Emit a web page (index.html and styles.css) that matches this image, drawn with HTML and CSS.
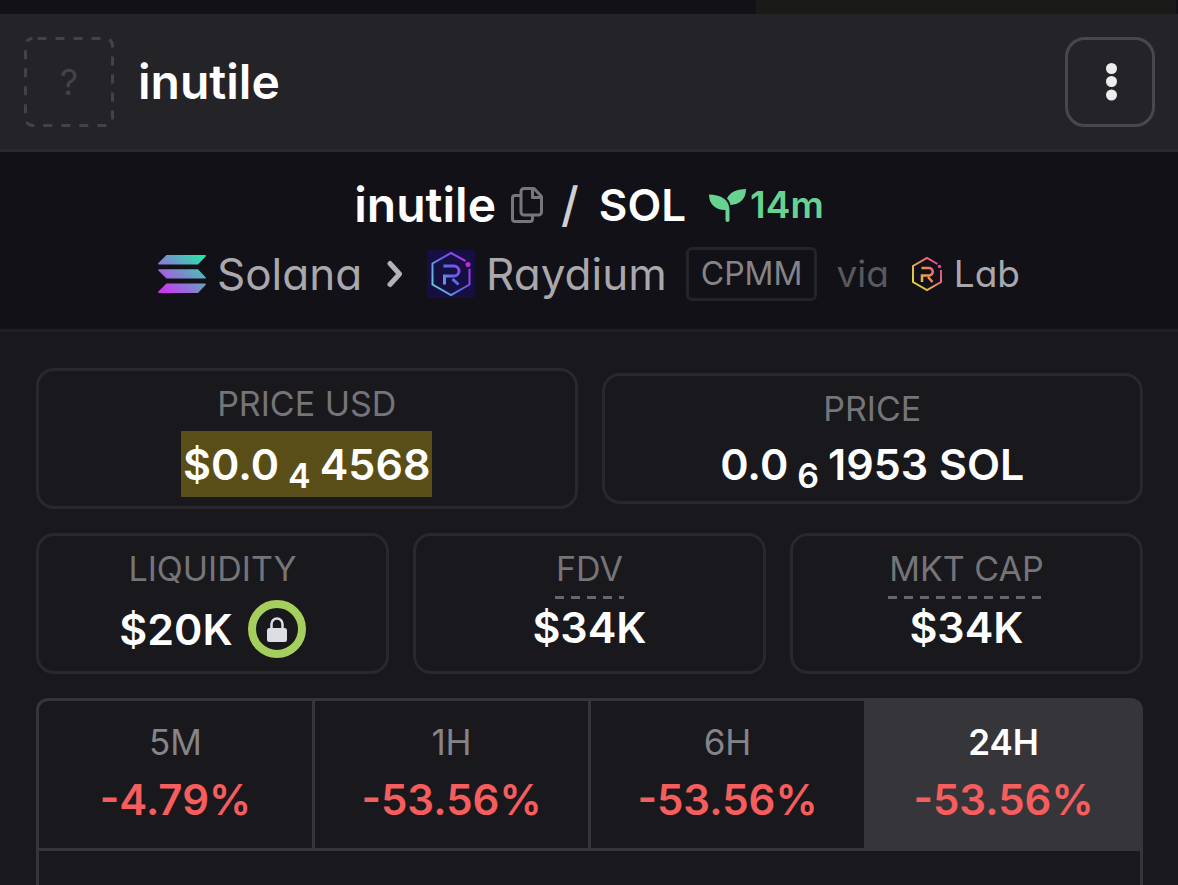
FILE: index.html
```html
<!DOCTYPE html>
<html lang="en">
<head>
  <meta charset="UTF-8">
  <meta name="viewport" content="width=device-width, initial-scale=1.0">
  <title>inutile / SOL</title>
  <link rel="stylesheet" href="styles.css">
</head>
<body>
  <div class="top-strip"><div class="top-strip-block"></div></div>

  <header class="header">
    <div class="token-image">
      <svg class="token-frame" viewBox="0 0 90 90" aria-hidden="true">
        <rect x="1.5" y="1.5" width="87" height="87" rx="7" fill="none" stroke="#434347" stroke-width="3" stroke-dasharray="9 9" stroke-dashoffset="-5"/>
      </svg>
      <span>?</span>
    </div>
    <h1 class="token-name">inutile</h1>
    <button class="menu-button" type="button" aria-label="More options">
      <svg width="14" height="38" viewBox="0 0 14 38" fill="#ededf0" aria-hidden="true">
        <circle cx="8.500" cy="5.500" r="5.500"/>
        <circle cx="8.500" cy="18.500" r="5.500"/>
        <circle cx="8.500" cy="32" r="5.500"/>
      </svg>
    </button>
  </header>

  <section class="pair">
    <h2 class="pair-title">
      <span class="base">inutile</span>
      <button class="copy-button" type="button" aria-label="Copy token address">
        <svg width="32" height="36" viewBox="0 0 32 36" fill="none" stroke="#77777b" stroke-width="3" stroke-linejoin="round" aria-hidden="true">
          <path d="M13 1.500h10l7.500 8V25a3 3 0 0 1-3 3H13a3 3 0 0 1-3-3V4.500a3 3 0 0 1 3-3z"/>
          <path d="M21.500 2v8.500H30"/>
          <path d="M10 8.500H4A2.500 2.500 0 0 0 1.500 11v21A2.500 2.500 0 0 0 4 34.500h15a2.500 2.500 0 0 0 2.500-2.500v-4"/>
        </svg>
      </button>
      <span class="slash">/</span>
      <span class="quote">SOL</span>
      <span class="age">
        <svg width="37" height="33" viewBox="0 0 37 33" fill="#68d391" aria-hidden="true">
          <path d="M0 5.500c11 0 20.500 4.500 20.500 15.500v10a2 2 0 0 1-4 0V21C6 21 0 15 0 5.500z"/>
          <path d="M37 0c0 10-6 15.500-15.500 16-.5-2.500-1.500-4.500-3.500-6.500C21 3.500 27 0 37 0z"/>
        </svg>
        <span>14m</span>
      </span>
    </h2>

    <nav class="route">
      <a class="route-link" href="#">
        <svg width="48" height="38" viewBox="0 0 48 38" aria-hidden="true">
          <defs>
            <linearGradient id="sol" gradientUnits="userSpaceOnUse" x1="44" y1="-4" x2="8" y2="40">
              <stop offset="0" stop-color="#19f2a5"/>
              <stop offset="1" stop-color="#cf33f0"/>
            </linearGradient>
          </defs>
          <path fill="url(#sol)" d="M8.500 0H47a.8.8 0 0 1 .6 1.400L40 9.500H1a.8.8 0 0 1-.6-1.400zM1 14.200h39l7.600 8a.8.8 0 0 1-.6 1.400H8.500L.4 15.600a.8.8 0 0 1 .6-1.400zM8.500 28.500H47a.8.8 0 0 1 .6 1.400L40 38H1a.8.8 0 0 1-.6-1.400z"/>
        </svg>
        <span>Solana</span>
      </a>
      <svg class="chevron" width="17" height="28" viewBox="0 0 17 28" fill="none" stroke="#b3b3b5" stroke-width="5" stroke-linecap="round" stroke-linejoin="round" aria-hidden="true">
        <path d="M4 3.500L13.500 14 4 24.500"/>
      </svg>
      <a class="route-link" href="#">
        <svg width="48" height="48" viewBox="0 0 48 48" fill="none" aria-hidden="true">
          <defs>
            <linearGradient id="ray" gradientUnits="userSpaceOnUse" x1="43" y1="12" x2="5" y2="34">
              <stop offset="0" stop-color="#b92be6"/>
              <stop offset=".5" stop-color="#5a68ea"/>
              <stop offset="1" stop-color="#67c9dc"/>
            </linearGradient>
          </defs>
          <rect width="48" height="48" rx="3" fill="#160f42"/>
          <g stroke="url(#ray)">
            <path stroke-width="2" d="M38.500 11L24 3 5.500 13.500v21L24 45l18.500-10.500V19"/>
            <path stroke-width="3" d="M16.500 16H27a5 5 0 0 1 0 10h-9.500v8.500M25.500 29l6 5.500"/>
          </g>
          <circle cx="41" cy="14.500" r="2.500" fill="#c22be0"/>
        </svg>
        <span>Raydium</span>
      </a>
      <span class="pool-type">CPMM</span>
      <span class="via">via</span>
      <a class="route-link lab" href="#">
        <svg width="32" height="36" viewBox="0 0 32 36" fill="none" aria-hidden="true">
          <defs>
            <linearGradient id="lab" gradientUnits="userSpaceOnUse" x1="30" y1="8" x2="3" y2="26">
              <stop offset="0" stop-color="#e0409c"/>
              <stop offset=".5" stop-color="#f08a58"/>
              <stop offset="1" stop-color="#e3d23c"/>
            </linearGradient>
          </defs>
          <g stroke="url(#lab)">
            <path stroke-width="2" d="M26.500 8L16 2 2 10v16l14 8 14-8V14"/>
            <path stroke-width="2.500" d="M10.500 12H18a3.500 3.500 0 0 1 0 7.500h-7V26M17 21l4.500 5"/>
          </g>
          <circle cx="28.500" cy="10.500" r="1.800" fill="#e83ca8"/>
        </svg>
        <span>Lab</span>
      </a>
    </nav>
  </section>

  <main class="stats">
    <div class="row row-prices">
      <div class="card">
        <div class="label">PRICE USD</div>
        <div class="value highlight">$0.0<sub>4</sub>4568</div>
      </div>
      <div class="card">
        <div class="label">PRICE</div>
        <div class="value">0.0<sub>6</sub>1953 SOL</div>
      </div>
    </div>

    <div class="row">
      <div class="card">
        <div class="label">LIQUIDITY</div>
        <div class="value liquidity">
          <span>$20K</span>
          <span class="lock">
            <svg width="20" height="26" viewBox="0 0 20 26" aria-hidden="true">
              <path d="M4.500 13V8a5.500 5.500 0 0 1 11 0v5" fill="none" stroke="#dddde4" stroke-width="2.500"/>
              <rect y="12" width="20" height="14" rx="2.500" fill="#dddde4"/>
            </svg>
          </span>
        </div>
      </div>
      <div class="card">
        <div class="label hint">FDV</div>
        <div class="value">$34K</div>
      </div>
      <div class="card">
        <div class="label hint">MKT CAP</div>
        <div class="value">$34K</div>
      </div>
    </div>

    <div class="panel">
      <div class="tabs">
        <button class="tab" type="button"><span class="period">5M</span><span class="change">-4.79%</span></button>
        <button class="tab" type="button"><span class="period">1H</span><span class="change">-53.56%</span></button>
        <button class="tab" type="button"><span class="period">6H</span><span class="change">-53.56%</span></button>
        <button class="tab active" type="button"><span class="period">24H</span><span class="change">-53.56%</span></button>
      </div>
    </div>
  </main>
</body>
</html>
```
FILE: styles.css
```css
* {
  box-sizing: border-box;
}

body {
  margin: 0;
  min-height: 100vh;
  display: flex;
  flex-direction: column;
  background: #19181d;
  color: #fff;
  font-family: Inter, "Liberation Sans", sans-serif;
  font-feature-settings: "cv11";
}

button {
  font: inherit;
  font-feature-settings: inherit;
  color: inherit;
  background: none;
  border: none;
  padding: 0;
  cursor: pointer;
}

a {
  color: inherit;
  text-decoration: none;
}

svg {
  display: block;
  flex-shrink: 0;
}

h1, h2 {
  margin: 0;
  font-weight: 600;
}

.top-strip {
  display: flex;
  justify-content: flex-end;
  height: 14px;
  padding-right: 2px;
  background: #121117;
}

.top-strip-block {
  width: 420px;
  background: #1a1a19;
}

.header {
  display: flex;
  align-items: center;
  gap: 24px;
  padding: 23px 23px 22px 24px;
  background: #242328;
  border-bottom: 3px solid #2a292e;
}

.token-image {
  display: grid;
  place-items: center;
  width: 90px;
  height: 90px;
  color: #434347;
  font-size: 36px;
}

.token-frame, .token-image span {
  grid-area: 1 / 1;
}

.token-frame {
  width: 90px;
  height: 90px;
}

.token-name {
  flex: 1;
  font-size: 48px;
  line-height: 56px;
}

.menu-button {
  display: grid;
  place-items: center;
  width: 90px;
  height: 90px;
  border: 3px solid #48474c;
  border-radius: 20px;
}

.pair {
  padding: 18px 24px 22px;
  background: #121117;
  border-bottom: 3px solid #201f24;
}

.pair-title {
  display: flex;
  justify-content: center;
  align-items: center;
  font-size: 44px;
  line-height: 70px;
}

.base {
  font-size: 48px;
}

.copy-button {
  margin-left: 15px;
}

.slash {
  margin: 0 20px 0 18px;
  color: #cfcfd1;
  font-size: 48px;
  font-weight: 500;
}

.age {
  display: flex;
  align-items: center;
  gap: 4px;
  margin-left: 23px;
  color: #68d391;
  font-size: 37px;
}

.route {
  display: flex;
  justify-content: center;
  align-items: center;
  height: 67px;
  color: #a9a8ac;
  font-size: 44px;
}

.route-link {
  display: flex;
  align-items: center;
  gap: 11px;
}

.chevron {
  margin: 0 24px;
}

.pool-type {
  margin: 0 19px;
  padding: 0 12px;
  border: 3px solid #242328;
  border-radius: 6px;
  color: #858488;
  font-size: 32px;
  line-height: 48px;
}

.via {
  margin-right: 22px;
  color: #59585c;
  font-size: 37px;
}

.lab {
  font-size: 37px;
}

.stats {
  flex: 1;
  display: flex;
  flex-direction: column;
  gap: 24px;
  padding: 36px 35px 0 36px;
}

.row {
  display: flex;
  gap: 24px;
}

.row-prices {
  align-items: center;
}

.card {
  flex: 1;
  display: flex;
  flex-direction: column;
  align-items: center;
  padding: 9px;
  border: 3px solid #29282d;
  border-radius: 18px;
}

.label {
  margin-bottom: 3px;
  color: #757478;
  font-size: 34px;
  line-height: 48px;
}

.label.hint {
  margin-bottom: 0;
  padding: 0 1px 6px;
  background: repeating-linear-gradient(90deg, #68676b 0 9px, transparent 9px 16px) left bottom / 100% 3px no-repeat;
}

.value {
  font-size: 43px;
  font-weight: 600;
  line-height: 56px;
}

.value sub {
  margin: 0 9px;
  font-size: 34px;
  line-height: 0;
  vertical-align: -8px;
}

.highlight {
  padding: 0 2px;
  background: #594e18;
  line-height: 66px;
}

.liquidity {
  display: flex;
  align-items: center;
  gap: 15px;
  height: 66px;
}

.lock {
  display: grid;
  place-items: center;
  width: 58px;
  height: 58px;
  border: 8px solid #a5cf5c;
  border-radius: 50%;
}

.panel {
  flex: 1;
  border: 3px solid #36353a;
  border-bottom: none;
  border-radius: 12px 12px 0 0;
}

.tabs {
  display: flex;
  border-bottom: 3px solid #36353a;
}

.tab {
  flex: 1;
  display: flex;
  flex-direction: column;
  align-items: center;
  padding: 12px 0 19px;
}

.tab + .tab {
  border-left: 3px solid #36353a;
}

.period {
  color: #858488;
  font-size: 35px;
  line-height: 58px;
}

.change {
  color: #f65d5d;
  font-size: 42px;
  font-weight: 600;
  line-height: 58px;
}

.tab.active {
  background: #36353a;
}

.active .period {
  color: #fff;
  font-weight: 600;
}
```
